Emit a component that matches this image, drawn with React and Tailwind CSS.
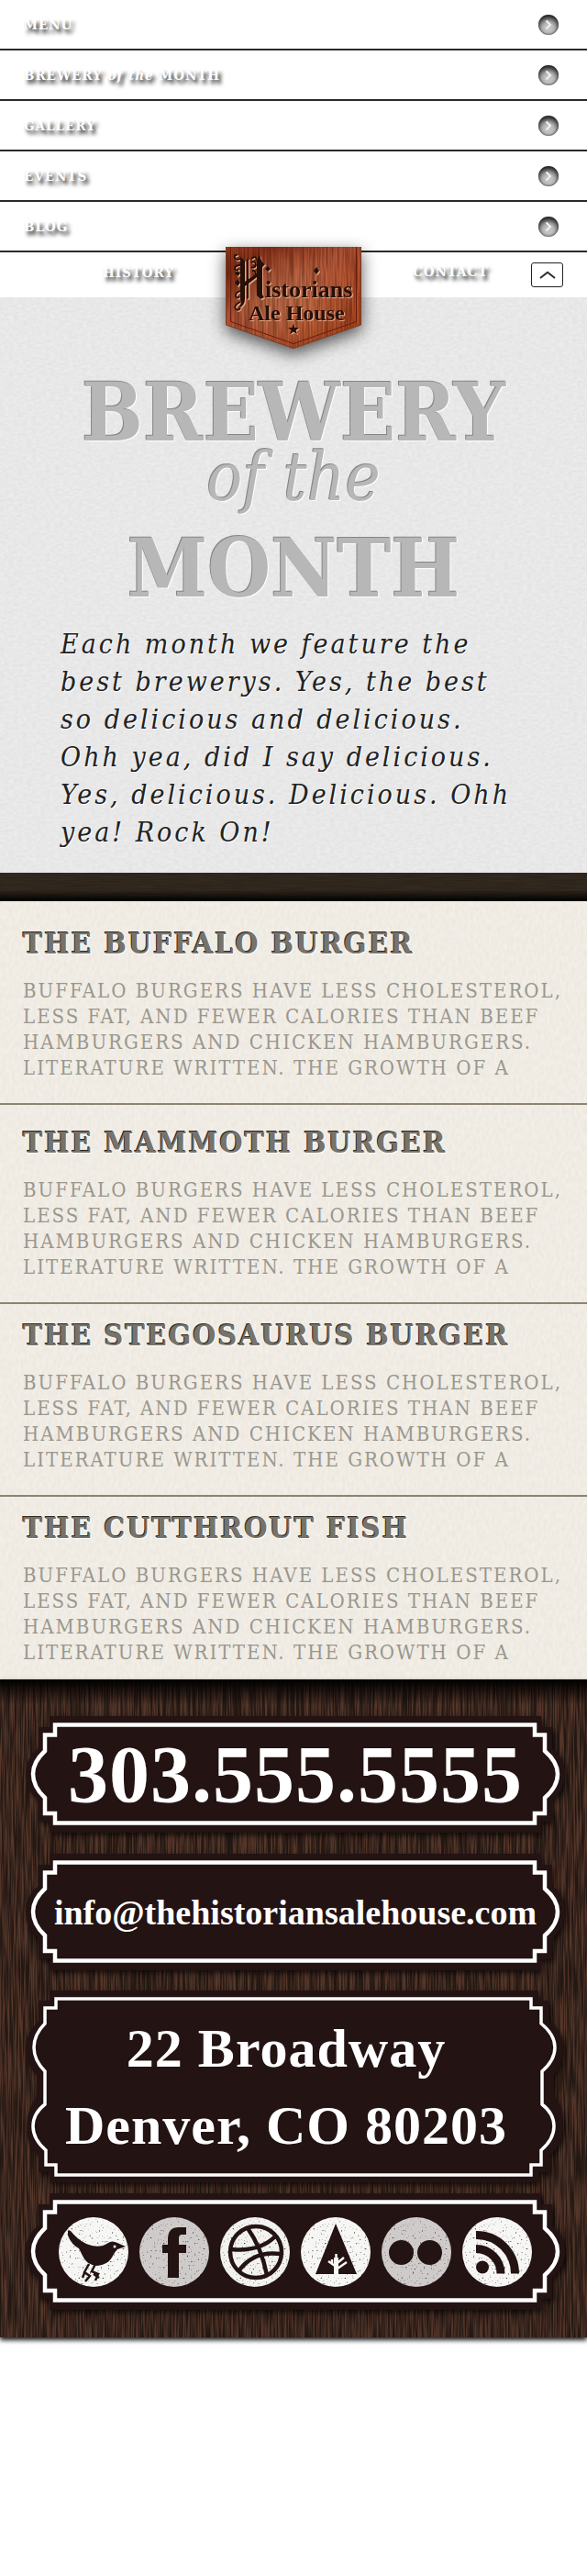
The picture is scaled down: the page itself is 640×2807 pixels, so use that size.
import React from "react";

const slab = "font-['DejaVu_Serif_Condensed','DejaVu_Serif',serif]";
const navText =
  "font-['DejaVu_Serif_Condensed','DejaVu_Serif',serif] text-[15px] leading-5 font-bold tracking-[1px] text-white [text-shadow:3px_4px_4px_rgba(0,0,0,0.9)]";

const navItems = [
  { id: "menu", label: "MENU" },
  {
    id: "brewery",
    label: (
      <>
        BREWERY <em>of the</em> MONTH
      </>
    ),
  },
  { id: "gallery", label: "GALLERY" },
  { id: "events", label: "EVENTS" },
  { id: "blog", label: "BLOG" },
];

const blurb =
  "BUFFALO BURGERS HAVE LESS CHOLESTEROL, LESS FAT, AND FEWER CALORIES THAN BEEF HAMBURGERS AND CHICKEN HAMBURGERS. LITERATURE WRITTEN. THE GROWTH OF A";

const dishes = [
  { name: "THE BUFFALO BURGER", pad: "pt-[26px] pb-6 border-b-2" },
  { name: "THE MAMMOTH BURGER", pad: "pt-[21px] pb-6 border-b-2" },
  { name: "THE STEGOSAURUS BURGER", pad: "pt-[14px] pb-6 border-b-2" },
  { name: "THE CUTTHROUT FISH", pad: "pt-[14px] pb-[15px]" },
];

/* Grain drawn with turbulence; `id` selects one of the filters in <Filters>. */
function Texture({ id }) {
  const filters = { paper: "url(#paper)", linen: "url(#linen)", wood: "url(#wood)", darkwood: "url(#darkwood)" };
  return (
    <svg aria-hidden="true" className="pointer-events-none absolute inset-0 h-full w-full">
      <rect width="100%" height="100%" filter={filters[id]} />
    </svg>
  );
}

function Filters() {
  return (
    <svg aria-hidden="true" className="absolute h-0 w-0">
      <defs>
        <filter id="paper" x="0" y="0" width="100%" height="100%" colorInterpolationFilters="sRGB">
          <feTurbulence type="fractalNoise" baseFrequency="0.2 0.35" numOctaves="3" seed="4" />
          <feColorMatrix values="0.06 0 0 0 0.879  0.06 0 0 0 0.879  0.06 0 0 0 0.879  0 0 0 0 1" />
        </filter>
        <filter id="linen" x="0" y="0" width="100%" height="100%" colorInterpolationFilters="sRGB">
          <feTurbulence type="fractalNoise" baseFrequency="0.3 0.15" numOctaves="3" seed="9" />
          <feColorMatrix values="0.05 0 0 0 0.915  0.05 0 0 0 0.9  0.06 0 0 0 0.865  0 0 0 0 1" />
        </filter>
        <filter id="darkwood" x="0" y="0" width="100%" height="100%" colorInterpolationFilters="sRGB">
          <feTurbulence type="fractalNoise" baseFrequency="0.03 0.7" numOctaves="3" seed="2" />
          <feColorMatrix values="0.06 0 0 0 0.155  0.06 0 0 0 0.122  0.05 0 0 0 0.09  0 0 0 0 1" />
        </filter>
        <filter id="wood" x="0" y="0" width="100%" height="100%" colorInterpolationFilters="sRGB">
          <feTurbulence type="fractalNoise" baseFrequency="0.55 0.02" numOctaves="2" seed="7" />
          <feColorMatrix values="1 0 0 0 0  1 0 0 0 0  1 0 0 0 0  0 0 0 0 1" />
          <feComponentTransfer>
            <feFuncR type="table" tableValues="0.13 0.13 0.14 0.22 0.33 0.35 0.35" />
            <feFuncG type="table" tableValues="0.09 0.09 0.095 0.145 0.21 0.225 0.225" />
            <feFuncB type="table" tableValues="0.07 0.07 0.075 0.115 0.16 0.17 0.17" />
          </feComponentTransfer>
        </filter>
        <filter id="speckle" x="0" y="0" width="100%" height="100%" colorInterpolationFilters="sRGB">
          <feTurbulence type="fractalNoise" baseFrequency="0.5" numOctaves="2" seed="12" />
          <feColorMatrix values="0 0 0 0 0.3  0 0 0 0 0.27  0 0 0 0 0.27  6 0 0 0 -3.900" />
        </filter>
        <filter id="copper" x="0" y="0" width="100%" height="100%" colorInterpolationFilters="sRGB">
          <feTurbulence type="fractalNoise" baseFrequency="0.5 0.02" numOctaves="3" seed="5" />
          <feColorMatrix values="0 0 0 0 0.2  0 0 0 0 0.05  0 0 0 0 0  0.9 0 0 0 -0.25" />
        </filter>
        <linearGradient id="mahogany" x1="0" y1="0" x2="1" y2="1">
          <stop offset="0" stopColor="#a8441f" />
          <stop offset="0.15" stopColor="#8a331b" />
          <stop offset="0.45" stopColor="#b5583a" />
          <stop offset="0.7" stopColor="#b9532c" />
          <stop offset="1" stopColor="#a8431c" />
        </linearGradient>
        <radialGradient id="shine" cx="0.45" cy="0.52" r="0.5">
          <stop offset="0" stopColor="#dd9468" stopOpacity="0.5" />
          <stop offset="1" stopColor="#dd9468" stopOpacity="0" />
        </radialGradient>
        <clipPath id="shield">
          <path d="M0 0H148V85L74 111L0 85Z" />
        </clipPath>
        <clipPath id="disc">
          <circle cx="38" cy="38" r="38" />
        </clipPath>
      </defs>
    </svg>
  );
}

function ArrowDot() {
  return (
    <span className="flex h-[22px] w-[22px] items-center justify-center rounded-full bg-[#c3c3c5] shadow-[inset_0_4px_6px_#111,inset_0_-1px_2px_#777]">
      <svg aria-hidden="true" width="8" height="12" viewBox="0 0 8 12" fill="none" stroke="#f1f1f1" strokeWidth="2">
        <path d="M1.5 1.5L6 6L1.5 10.5" />
      </svg>
    </span>
  );
}

function Logo() {
  return (
    <svg
      role="img"
      aria-label="Historians Ale House"
      width="148"
      height="112"
      viewBox="0 0 148 112"
      className="overflow-visible drop-shadow-[0_6px_9px_rgba(0,0,0,0.65)]"
    >
      <g clipPath="url(#shield)">
        <rect width="148" height="112" fill="url(#mahogany)" />
        <rect width="148" height="112" fill="url(#shine)" />
        <rect width="148" height="112" filter="url(#copper)" />
      </g>
      <path d="M0.5 0V85L74 110.5L147.5 85V0" fill="none" stroke="#7c3a22" />
      <path d="M5.5 0V81.5L74 105.5L142.500 81.500V0" fill="none" stroke="#6a1c08" />
      {[
        { shift: "translate(1.200 1.200)", ink: "#e9a684" },
        { shift: "translate(0 0)", ink: "#25100a" },
      ].map(({ shift, ink }) => (
        <g key={ink} transform={shift} fill={ink} fontFamily="'Liberation Serif', serif" fontWeight="700">
          <path d="M16 11L21 15V57Q21 64 14 67Q18 62 16 57Z" />
          <path d="M23 14L25 12V56L23 57Z" />
          <path d="M34 14L37 9Q38 15 43 19L40 22V52L42 55L38 57L34 53Z" />
          <path d="M21 38L34 29V33L21 43Z" />
          <path
            d="M16 13Q12 15 10 12Q9 8 13 9M16 20Q10 20 10 24Q12 27 14 24M16 48Q10 50 11 54Q13 57 15 54M16 60Q11 62 10 66Q12 71 16 67M28 13Q33 9 34 14M28 17Q33 15 33 20Q31 24 28 22M29 26Q33 26 33 30"
            fill="none"
            stroke={ink}
            strokeWidth="1.800"
          />
          <path d="M13 26l3 3-3 3-3-3zM13 35l3 4-3 4-3-4zM46 21l3 3-3 3-3-3zM99 22l3 4-3 4-3-4z" />
          <text x="43" y="55" fontSize="26">
            istorians
          </text>
          <text x="25" y="80" fontSize="24">
            Ale House
          </text>
          <path d="M74 84L75.500 88L80 88L76.500 91L78 95L74 92.500L70 95L71.500 91L68 88L72.500 88Z" />
        </g>
      ))}
    </svg>
  );
}

const plaqueShapes = {
  small: {
    box: "0 0 588 127",
    body: "M26 0H562V12H574V35Q588 46 588 63Q588 81 574 92V115H562V127H26V115H14V92Q0 81 0 63Q0 46 14 35V12H26Z",
    line: "M32 9.500H555V20.500H566V38Q580 50 580 63Q580 77 566 89V106H555V116.500H32V106H21V89Q8 77 8 63Q8 50 21 38V20.500H32Z",
    stroke: 4.5,
  },
  tall: {
    box: "0 0 588 209",
    body: "M26 0H559V11H571V34Q586 46 586 62Q586 80 576 92V115Q586 128 586 148Q586 167 571 180V198H559V209H26V198H14V180Q0 167 2 148Q2 128 12 115V92Q0 80 0 62Q0 46 14 34V11H26Z",
    line: "M33 9H551V19H562V36Q577 48 577 62Q577 76 563 88V124Q576 134 576 148Q576 162 562 174V190H551V201H33V190H22V174Q8 162 8 148Q8 134 21 124V88Q9 76 9 62Q9 48 21 36V19H33Z",
    stroke: 3.5,
  },
};

function Plaque({ shape = "small", className, children }) {
  const { box, body, line, stroke } = plaqueShapes[shape];
  return (
    <div className={`relative ${className}`}>
      <svg
        aria-hidden="true"
        viewBox={box}
        preserveAspectRatio="none"
        className="absolute inset-0 h-full w-full overflow-visible drop-shadow-[2px_3px_3px_rgba(0,0,0,0.7)]"
      >
        <path d={body} fill="#231313" />
        <path d={line} fill="none" stroke="#fff" strokeWidth={stroke} />
      </svg>
      <div className="relative flex h-full items-center justify-center">{children}</div>
    </div>
  );
}

const ink = "#231313";

const socials = [
  {
    name: "Twitter",
    tone: "#f6f6f4",
    art: (
      <g>
        <path
          d="M10 16Q9 13 13 15Q20 24 30 29Q39 33 48 31Q51 30 54 28Q58 25 64 28L73 32L64 35Q60 39 58 44Q53 52 42 53Q30 52 26 42Q24 38 22 34Q14 30 10 20Z"
          fill={ink}
        />
        <circle cx="61" cy="32" r="1.500" fill="#f6f6f4" />
        <path d="M33 51L28 60L34 64L29 70M28 61L26 66M40 51L36 59L43 62L40 69M38 62L44 66" fill="none" stroke={ink} strokeWidth="2.500" />
      </g>
    ),
  },
  {
    name: "Facebook",
    tone: "#cfcbca",
    art: <path d="M31 66V39H25V30H31V24Q31 11 43 11H51V19H46Q43 19 43 23V30H51V39H43V66Z" fill={ink} />,
  },
  {
    name: "Dribbble",
    tone: "#f2f2f0",
    art: (
      <g fill="none" stroke={ink} strokeWidth="4.500">
        <circle cx="39" cy="38" r="28" />
        <path d="M12 35Q44 38 61 20M30 12Q45 33 51 63M20 59Q36 36 66 40" />
      </g>
    ),
  },
  {
    name: "Forrst",
    tone: "#f6f6f4",
    art: (
      <g>
        <path d="M38 7L61 62H16Z" fill={ink} />
        <path d="M38.500 40V63M38.500 54L30 48M38.500 51L47 44M38.500 57L50 49M34 51V46" fill="none" stroke="#f6f6f4" strokeWidth="2.500" />
        <path d="M38.500 44V63" stroke="#f6f6f4" strokeWidth="5" />
      </g>
    ),
  },
  {
    name: "Flickr",
    tone: "#cfcbca",
    art: (
      <g fill={ink}>
        <circle cx="21.500" cy="38.500" r="13.500" />
        <circle cx="52.500" cy="38.500" r="13.500" />
      </g>
    ),
  },
  {
    name: "RSS",
    tone: "#f6f6f4",
    art: (
      <g fill="none" stroke={ink} strokeWidth="9">
        <circle cx="22" cy="54.500" r="7" fill={ink} stroke="none" />
        <path d="M15 34.500A27 27 0 0 1 42 61.500M15 19.500A42 42 0 0 1 57.500 61.500" />
      </g>
    ),
  },
];

export default function App() {
  return (
    <div className="relative w-full bg-white pb-[260px]">
      <Filters />

      <header>
        <nav aria-label="Main">
          <ul>
            {navItems.map(({ id, label }) => (
              <li key={id} className="border-b-2 border-[#2b292b]">
                <a href={`#${id}`} className="flex h-[53px] items-center justify-between pr-[31px] pl-[26px]">
                  <span className={navText}>{label}</span>
                  <ArrowDot />
                </a>
              </li>
            ))}
          </ul>
        </nav>
        <div className="relative z-10 grid h-[49px] grid-cols-[1fr_148px_1fr]">
          <a href="#history" className={`${navText} justify-self-end pt-3 pr-14`}>
            HISTORY
          </a>
          <a href="#home" className="-mt-1.5 h-[112px]">
            <Logo />
          </a>
          <div className="flex items-start justify-between pt-[11px] pr-[26px] pl-14">
            <a href="#contact" className={navText}>
              CONTACT
            </a>
            <button
              type="button"
              aria-label="Collapse menu"
              className="flex h-[27px] w-[35px] items-center justify-center rounded-[3px] border border-[#222] bg-white"
            >
              <svg aria-hidden="true" width="18" height="9" viewBox="0 0 18 9" fill="none" stroke="#2b292b" strokeWidth="2">
                <path d="M1 8L9 1.800L17 8" />
              </svg>
            </button>
          </div>
        </div>
      </header>

      <main>
        <section id="brewery" className="relative overflow-hidden bg-[#e8e8e8]">
          <Texture id="paper" />
          <div className="relative px-[66px] pt-20 pb-6">
            <h1
              className={`${slab} flex flex-col items-center font-bold text-[#b7b7b7] [text-shadow:-1px_-1px_0_#858585,1px_1px_1px_#fff]`}
            >
              <span className="text-[88px] leading-[90px]">BREWERY</span>
              <em className="text-[72px] leading-[52px] font-normal">of the</em>
              <span className="mt-7 text-[88px] leading-[90px]">MONTH</span>
            </h1>
            <p className={`${slab} mt-[17px] text-[30px] leading-[41px] tracking-[3px] text-[#222] italic [text-shadow:1px_1px_1px_#fff]`}>
              Each month we feature the best brewerys. Yes, the best so delicious and delicious. Ohh yea, did I say
              delicious. Yes, delicious. Delicious. Ohh yea! Rock On!
            </p>
          </div>
        </section>

        <div className="relative h-[31px] overflow-hidden bg-[#2e261e]">
          <Texture id="darkwood" />
          <div className="relative h-full bg-linear-to-b from-transparent from-60% to-black" />
        </div>

        <section id="menu" className="relative overflow-hidden bg-[#f0ece4]">
          <Texture id="linen" />
          {dishes.map(({ name, pad }) => (
            <article key={name} className={`relative border-[#8c8371] px-[25px] ${pad}`}>
              <h2
                className={`${slab} text-[32px] leading-10 font-bold tracking-[2px] whitespace-nowrap text-[#77736a] [text-shadow:-1px_-1px_0_#2c2822,1px_1px_1px_#fff]`}
              >
                {name}
              </h2>
              <p className={`${slab} mt-[18px] text-[22px] leading-7 tracking-[2px] text-[#9a978e]`}>{blurb}</p>
            </article>
          ))}
        </section>
      </main>

      <footer className="relative bg-[#33221b] shadow-[0_3px_5px_rgba(0,0,0,0.9)]">
        <Texture id="wood" />
        <div className="relative bg-linear-to-b from-black to-transparent to-[28px] pt-10 pr-6 pb-[30px] pl-7 font-['Liberation_Serif',serif] font-bold text-white">
          <Plaque className="h-[127px]">
            <a href="tel:3035555555" className="text-[88px] leading-none tracking-[1px]">
              303.555.5555
            </a>
          </Plaque>
          <Plaque className="mt-[23px] h-[127px]">
            <a href="mailto:info@thehistoriansalehouse.com" className="text-[38px] leading-none">
              info@thehistoriansalehouse.com
            </a>
          </Plaque>
          <Plaque shape="tall" className="mt-[22px] h-[209px]">
            <address className="pr-5 text-center text-[60px] leading-[84px] tracking-[1px] not-italic">
              22 Broadway
              <br />
              Denver, CO 80203
            </address>
          </Plaque>
          <Plaque className="mt-3 h-[127px]">
            <ul className="flex gap-3">
              {socials.map(({ name, tone, art }) => (
                <li key={name}>
                  <a href={`#${name.toLowerCase()}`} aria-label={name}>
                    <svg aria-hidden="true" width="76" height="76" viewBox="0 0 76 76">
                      <circle cx="38" cy="38" r="38" fill={tone} />
                      <g clipPath="url(#disc)">
                        <rect width="76" height="76" filter="url(#speckle)" />
                      </g>
                      {art}
                    </svg>
                  </a>
                </li>
              ))}
            </ul>
          </Plaque>
        </div>
      </footer>
    </div>
  );
}
